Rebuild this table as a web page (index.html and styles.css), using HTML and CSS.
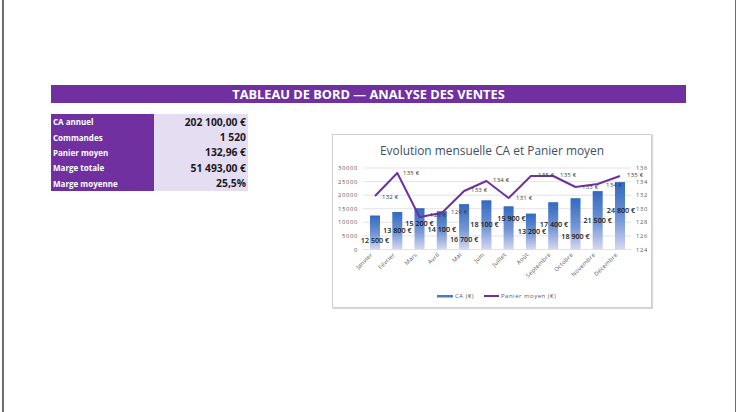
FILE: index.html
```html
<!DOCTYPE html>
<html lang="fr">
<head>
<meta charset="utf-8">
<title>Tableau de bord</title>
<link rel="stylesheet" href="styles.css">
</head>
<body>
<div class="page">
  <div class="banner">TABLEAU DE BORD — ANALYSE DES VENTES</div>
  <div class="content">
    <div class="kpi">
      <div class="lbl">CA annuel</div><div class="val">202 100,00 €</div>
      <div class="lbl">Commandes</div><div class="val">1 520</div>
      <div class="lbl">Panier moyen</div><div class="val">132,96 €</div>
      <div class="lbl">Marge totale</div><div class="val">51 493,00 €</div>
      <div class="lbl">Marge moyenne</div><div class="val">25,5%</div>
    </div>
    <div class="chart">
      <div class="chart-title">Evolution mensuelle CA et Panier moyen</div>
      <svg class="plot" viewBox="333 160 318 147" width="318" height="147">
        <defs>
          <linearGradient id="barg" x1="0" y1="0" x2="0" y2="1">
            <stop offset="0" stop-color="#3169bf"/>
            <stop offset="0.55" stop-color="#7396d6"/>
            <stop offset="1" stop-color="#d6d8f1"/>
          </linearGradient>
        </defs>
        <g class="grid">
          <line x1="363" y1="168" x2="631" y2="168"/>
          <line x1="363" y1="181.6" x2="631" y2="181.6"/>
          <line x1="363" y1="195.2" x2="631" y2="195.2"/>
          <line x1="363" y1="208.7" x2="631" y2="208.7"/>
          <line x1="363" y1="222.3" x2="631" y2="222.3"/>
          <line x1="363" y1="235.9" x2="631" y2="235.9"/>
          <line x1="363" y1="249.5" x2="631" y2="249.5"/>
        </g>
        <g class="axis-l">
          <text x="358" y="170">30000</text>
          <text x="358" y="183.6">25000</text>
          <text x="358" y="197.2">20000</text>
          <text x="358" y="210.7">15000</text>
          <text x="358" y="224.3">10000</text>
          <text x="358" y="237.9">5000</text>
          <text x="358" y="251.5">0</text>
        </g>
        <g class="axis-r">
          <text x="636" y="170">136</text>
          <text x="636" y="183.6">134</text>
          <text x="636" y="197.2">132</text>
          <text x="636" y="210.7">130</text>
          <text x="636" y="224.3">128</text>
          <text x="636" y="237.9">126</text>
          <text x="636" y="251.5">124</text>
        </g>
        <g fill="url(#barg)">
          <rect x="370" y="215.5" width="10" height="34"/>
          <rect x="392.3" y="212" width="10" height="37.5"/>
          <rect x="414.5" y="208.2" width="10" height="41.3"/>
          <rect x="436.8" y="211.2" width="10" height="38.3"/>
          <rect x="459.1" y="204.1" width="10" height="45.4"/>
          <rect x="481.4" y="200.3" width="10" height="49.2"/>
          <rect x="503.6" y="206.3" width="10" height="43.2"/>
          <rect x="525.9" y="213.6" width="10" height="35.9"/>
          <rect x="548.2" y="202.2" width="10" height="47.3"/>
          <rect x="570.5" y="198.2" width="10" height="51.3"/>
          <rect x="592.7" y="191.1" width="10" height="58.4"/>
          <rect x="615" y="182.1" width="10" height="67.4"/>
        </g>
        <polyline class="line" points="375,196 397.3,173 419.5,217 441.8,213 464.1,191 486.4,181 508.6,198 530.9,176 553.2,176 575.5,187 597.7,184 620,176"/>
        <g class="lbl-line">
          <text x="382" y="199">132 €</text>
          <text x="403" y="175">135 €</text>
          <text x="430" y="217">128 €</text>
          <text x="451" y="214">129 €</text>
          <text x="471" y="192">133 €</text>
          <text x="493" y="182">134 €</text>
          <text x="516" y="200">131 €</text>
          <text x="538" y="177">135 €</text>
          <text x="560" y="177">135 €</text>
          <text x="582" y="189">133 €</text>
          <text x="606" y="187">134 €</text>
          <text x="627" y="177">135 €</text>
        </g>
        <g class="lbl-bar">
          <text x="375" y="242.5">12 500 €</text>
          <text x="397.3" y="232.5">13 800 €</text>
          <text x="419.5" y="225.5">15 200 €</text>
          <text x="441.8" y="231.5">14 100 €</text>
          <text x="464.1" y="241.5">16 700 €</text>
          <text x="484.5" y="227">18 100 €</text>
          <text x="511.5" y="221">15 900 €</text>
          <text x="532" y="233.5">13 200 €</text>
          <text x="554" y="226.5">17 400 €</text>
          <text x="575.5" y="238.5">18 900 €</text>
          <text x="597.7" y="222.5">21 500 €</text>
          <text x="621" y="212.5">24 800 €</text>
        </g>
        <g class="axis-x">
          <text transform="translate(373,255) rotate(-45)">Janvier</text>
          <text transform="translate(395.3,255) rotate(-45)">Février</text>
          <text transform="translate(417.5,255) rotate(-45)">Mars</text>
          <text transform="translate(439.8,255) rotate(-45)">Avril</text>
          <text transform="translate(462.1,255) rotate(-45)">Mai</text>
          <text transform="translate(484.4,255) rotate(-45)">Juin</text>
          <text transform="translate(506.6,255) rotate(-45)">Juillet</text>
          <text transform="translate(528.9,255) rotate(-45)">Août</text>
          <text transform="translate(551.2,255) rotate(-45)">Septembre</text>
          <text transform="translate(573.5,255) rotate(-45)">Octobre</text>
          <text transform="translate(595.7,255) rotate(-45)">Novembre</text>
          <text transform="translate(618,255) rotate(-45)">Décembre</text>
        </g>
        <g class="legend">
          <rect x="437" y="295" width="16" height="2.5" fill="#4a7bc8"/>
          <text x="455" y="298">CA (€)</text>
          <line x1="484" y1="296" x2="499" y2="296" stroke="#7030a0" stroke-width="2"/>
          <text x="501" y="298">Panier moyen (€)</text>
        </g>
      </svg>
    </div>
  </div>
</div>
</body>
</html>
```

FILE: styles.css
```css
html, body {
  margin: 0;
  padding: 0;
  background: #ffffff;
  font-family: "Open Sans", "Liberation Sans", sans-serif;
}

.page {
  box-sizing: border-box;
  margin-left: 2px;
  width: 734px;
  height: 412px;
  border-left: 2px solid #6e6e6e;
  border-right: 1px solid #6e6e6e;
  padding-top: 85px;
  padding-left: 47px;
}

.banner {
  width: 635px;
  height: 18px;
  background: #7030a0;
  color: #ffffff;
  font-weight: 700;
  font-size: 12.8px;
  display: flex;
  align-items: center;
  justify-content: center;
}

.content {
  display: flex;
  align-items: flex-start;
  margin-top: 11px;
}

.kpi {
  display: grid;
  grid-template-columns: 103px 94px;
  grid-auto-rows: 15.4px;
}

.kpi .lbl {
  background: #7030a0;
  color: #ffffff;
  font-size: 8px;
  font-weight: 700;
  display: flex;
  align-items: center;
  padding-left: 2px;
}

.kpi .val {
  background: #e5ddf2;
  color: #1a1a1a;
  font-size: 10.3px;
  font-weight: 700;
  display: flex;
  align-items: center;
  justify-content: flex-end;
  padding-right: 2px;
}

.chart {
  box-sizing: border-box;
  margin-left: 84px;
  margin-top: 20px;
  width: 320px;
  height: 174px;
  border: 1px solid #cfcfcf;
  box-shadow: 1px 1px 1px rgba(0, 0, 0, 0.15);
  background: #ffffff;
}

.chart-title {
  box-sizing: border-box;
  height: 25px;
  padding-top: 7px;
  text-align: center;
  color: #3e4f66;
  font-size: 11.9px;
  line-height: 16px;
}

.plot {
  display: block;
}

.grid line {
  stroke: #dcdcdc;
  stroke-width: 0.8;
}

.axis-l text {
  font-size: 5.8px;
  letter-spacing: 0.7px;
  fill: #595959;
  text-anchor: end;
}

.axis-r text {
  font-size: 5.8px;
  letter-spacing: 0.7px;
  fill: #595959;
  text-anchor: start;
}

.line {
  fill: none;
  stroke: #7030a0;
  stroke-width: 2;
  stroke-linejoin: round;
}

.lbl-line text {
  font-size: 6px;
  letter-spacing: 0.2px;
  fill: #404040;
}

.lbl-bar text {
  font-size: 7.2px;
  font-weight: 600;
  fill: #1a1a1a;
  text-anchor: middle;
}

.axis-x text {
  font-size: 5.8px;
  letter-spacing: 0.3px;
  fill: #595959;
  text-anchor: end;
}

.legend text {
  font-size: 6px;
  letter-spacing: 0.5px;
  fill: #595959;
}
```
